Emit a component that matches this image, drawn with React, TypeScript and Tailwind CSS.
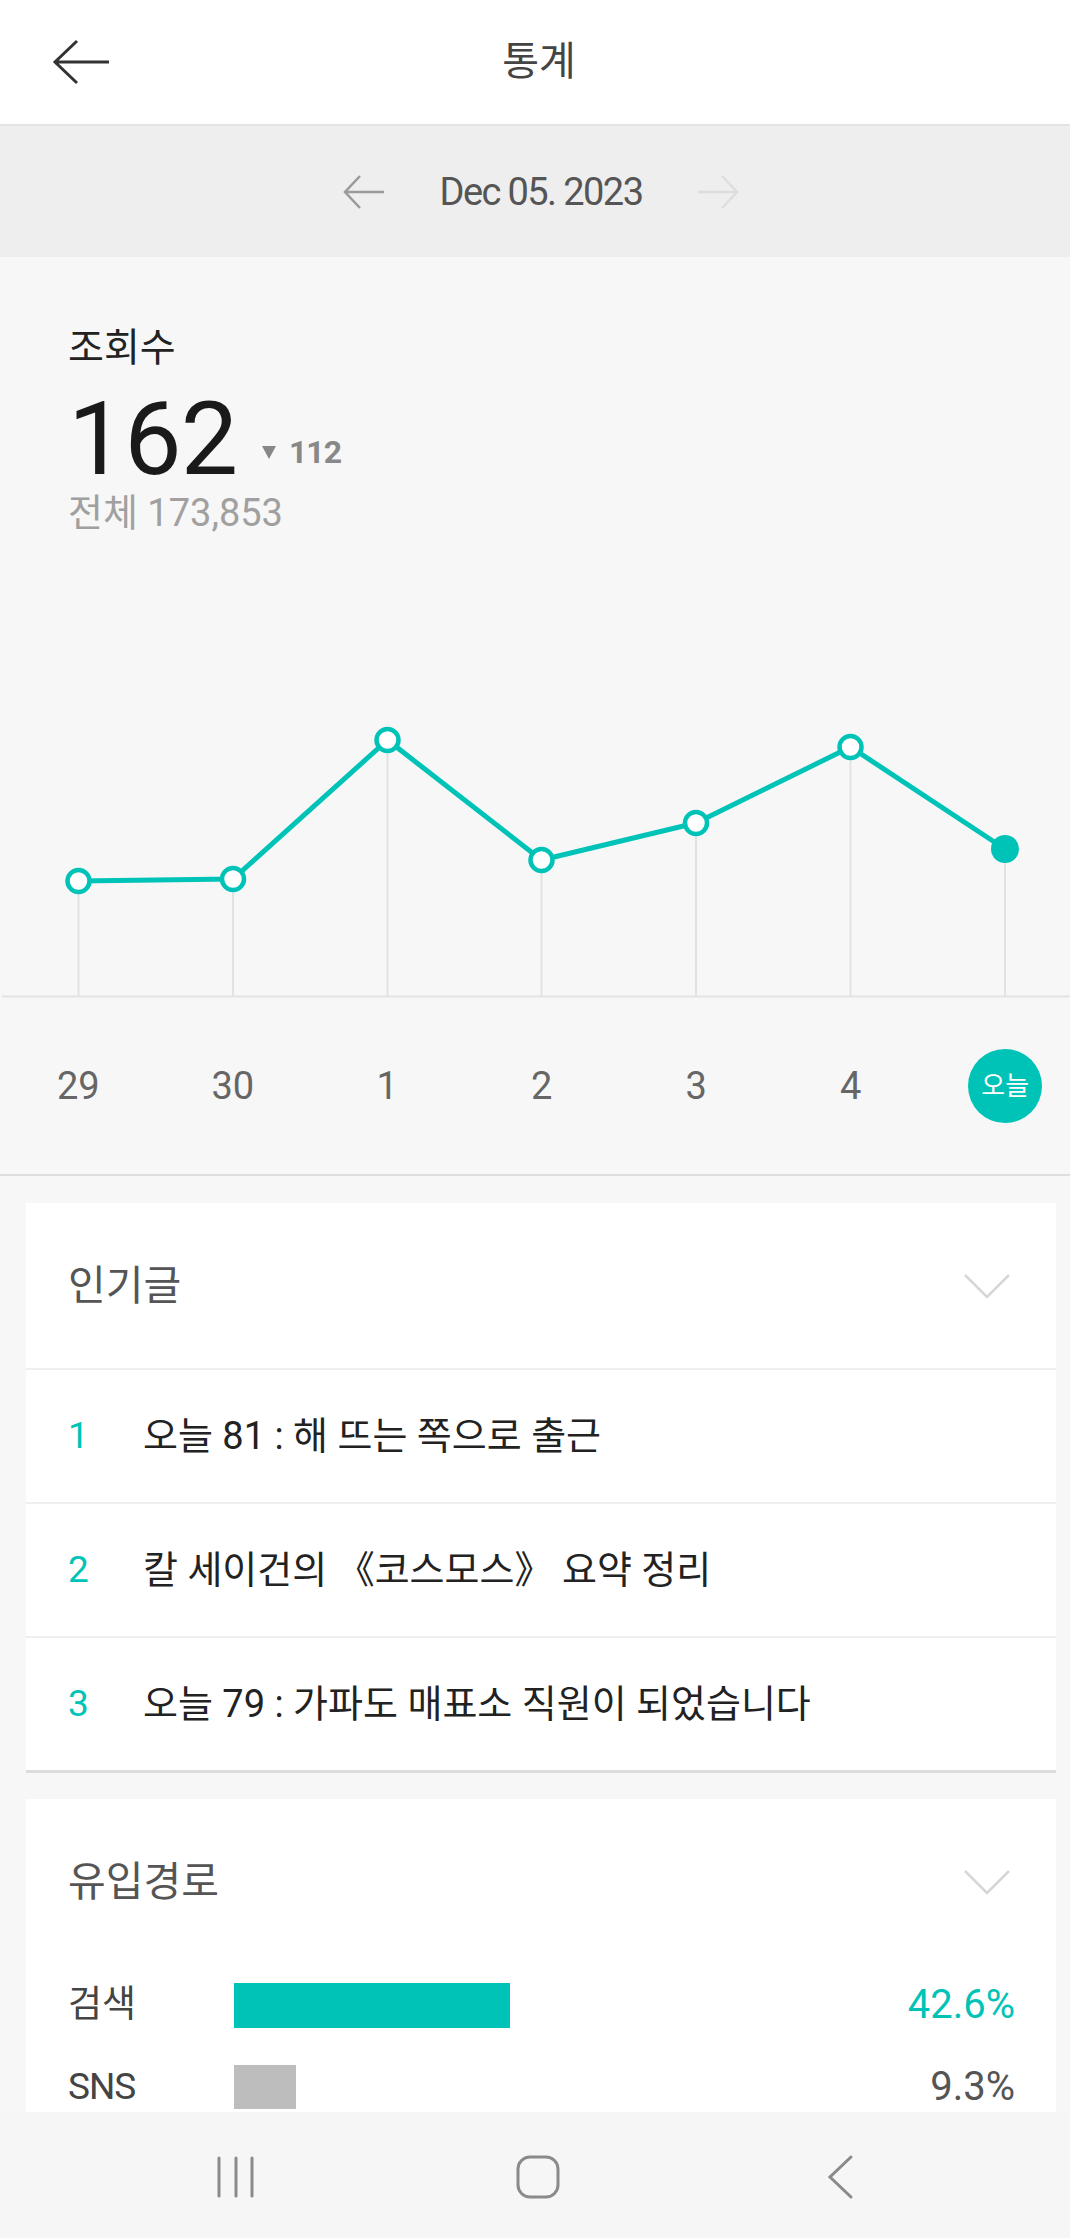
import React from "react";

const TEAL = "#00c3b8";

const points = [
  { x: 78.5, y: 321, label: "29" },
  { x: 233, y: 319, label: "30" },
  { x: 387.5, y: 180, label: "1" },
  { x: 541.5, y: 300, label: "2" },
  { x: 696, y: 263, label: "3" },
  { x: 850.5, y: 187, label: "4" },
  { x: 1005, y: 289, label: "오늘" },
];

const BASE = 436;

function Chart() {
  const d = points.map((p, i) => `${i === 0 ? "M" : "L"}${p.x} ${p.y}`).join(" ");
  return (
    <svg width="1070" height="438" viewBox="0 0 1070 438" className="block">
      {points.map((p) => (
        <line key={"v" + p.x} x1={p.x} y1={p.y} x2={p.x} y2={BASE} stroke="#e2e2e2" strokeWidth="2" />
      ))}
      <line x1="2" y1={BASE + 0.5} x2="1070" y2={BASE + 0.5} stroke="#e4e4e4" strokeWidth="2" />
      <path d={d} fill="none" stroke={TEAL} strokeWidth="5" strokeLinejoin="round" strokeLinecap="round" />
      {points.map((p, i) =>
        i === points.length - 1 ? (
          <circle key={"c" + i} cx={p.x} cy={p.y} r="14" fill={TEAL} />
        ) : (
          <circle key={"c" + i} cx={p.x} cy={p.y} r="11" fill="#ffffff" stroke={TEAL} strokeWidth="4.5" />
        )
      )}
    </svg>
  );
}

function Chevron() {
  return (
    <svg width="48" height="26" viewBox="0 0 48 26">
      <path d="M2 2 L24 24 L46 2" fill="none" stroke="#d6d6d6" strokeWidth="2.5" />
    </svg>
  );
}

const rows = [
  "오늘 81 : 해 뜨는 쪽으로 출근",
  "칼 세이건의 《코스모스》 요약 정리",
  "오늘 79 : 가파도 매표소 직원이 되었습니다",
];

export default function App() {
  return (
    <div
      className="w-[1070px] h-[2238px] flex flex-col overflow-hidden bg-[#f7f7f7]"
      style={{ fontFamily: '"Roboto", "Noto Sans CJK KR", "Noto Sans", sans-serif' }}
    >
      {/* Header */}
      <div className="h-[126px] shrink-0 bg-white border-b-2 border-[#e4e4e4] flex items-center">
        <div className="w-[160px] pl-[52px] flex items-center">
          <svg width="60" height="50" viewBox="0 0 60 50">
            <path d="M57 25 H3 M25 4 L3 25 L25 46" fill="none" stroke="#333333" strokeWidth="3" strokeLinejoin="miter" />
          </svg>
        </div>
        <div className="flex-1 text-center text-[40px] leading-[48px] text-[#444444]">통계</div>
        <div className="w-[152px]" />
      </div>

      {/* Date bar */}
      <div className="h-[131px] shrink-0 bg-[#eeeeee] flex items-center justify-center gap-[54px] pl-[12px]">
        <svg width="44" height="36" viewBox="0 0 44 36">
          <path d="M42 18 H3 M18 2 L3 18 L18 34" fill="none" stroke="#9a9a9a" strokeWidth="2.5" />
        </svg>
        <div className="text-[38px] leading-[44px] tracking-[-1.6px] text-[#555555]">Dec 05. 2023</div>
        <svg width="44" height="36" viewBox="0 0 44 36">
          <path d="M2 18 H41 M26 2 L41 18 L26 34" fill="none" stroke="#dddddd" strokeWidth="2.5" />
        </svg>
      </div>

      {/* Scroll content */}
      <div className="flex-1 overflow-hidden">
        {/* Stats */}
        <div className="border-b-2 border-[#dedede]">
          <div className="h-[303px] pl-[68px] pt-[69px]">
            <div className="text-[39px] leading-[44px] text-[#222222]">조회수</div>
            <div className="flex items-end mt-[25px]">
              <div className="text-[102px] leading-[88px] text-[#1a1a1a] tracking-[-1px]">162</div>
              <div className="flex items-center gap-[12px] ml-[24px] mb-[15px]">
                <svg width="16" height="15" viewBox="0 0 16 15">
                  <path d="M1 1 H15 L8 14 Z" fill="#888888" />
                </svg>
                <span className="text-[32px] leading-[32px] font-bold text-[#888888] tracking-[-1px]">112</span>
              </div>
            </div>
            <div className="text-[38px] leading-[40px] text-[#a0a0a0] mt-[10px]">전체 173,853</div>
          </div>
          <Chart />
          <div className="h-[176px] flex items-center pl-[1px]">
            {points.map((p, i) => (
              <div key={i} className="w-[154.5px] shrink-0 flex justify-center">
                {i === points.length - 1 ? (
                  <div className="w-[74px] h-[74px] rounded-full bg-[#00c3b8] flex items-center justify-center text-white text-[26px] leading-none">
                    {p.label}
                  </div>
                ) : (
                  <span className="text-[38px] leading-[44px] text-[#666666]">{p.label}</span>
                )}
              </div>
            ))}
          </div>
        </div>

        {/* Popular posts card */}
        <div className="mt-[27px] ml-[26px] mr-[14px] bg-white border-b-[3px] border-[#dcdcdc]">
          <div className="h-[165px] flex items-center justify-between pl-[42px] pr-[45px]">
            <span className="text-[41px] leading-[48px] text-[#555555]">인기글</span>
            <Chevron />
          </div>
          {rows.map((r, i) => (
            <div key={i} className="h-[134px] border-t-2 border-[#eeeeee] flex items-center pl-[42px]">
              <span className="w-[75px] text-[37px] leading-[44px] text-[#00c3b8]">{i + 1}</span>
              <span className="text-[38px] leading-[44px] text-[#222222]">{r}</span>
            </div>
          ))}
        </div>

        {/* Referrer card */}
        <div className="mt-[26px] ml-[26px] mr-[14px] bg-white">
          <div className="h-[165px] flex items-center justify-between pl-[42px] pr-[45px]">
            <span className="text-[41px] leading-[48px] text-[#555555]">유입경로</span>
            <Chevron />
          </div>
          <div className="h-[82px] flex items-center pl-[42px] pr-[41px]">
            <span className="w-[166px] text-[37px] leading-[44px] text-[#444444]">검색</span>
            <div className="flex-1">
              <div className="w-[276px] h-[45px] bg-[#00c3b8]" />
            </div>
            <span className="text-[40px] leading-[44px] text-[#00c3b8]">42.6%</span>
          </div>
          <div className="h-[82px] flex items-center pl-[42px] pr-[41px]">
            <span className="w-[166px] text-[37px] leading-[44px] tracking-[-1px] text-[#444444]">SNS</span>
            <div className="flex-1">
              <div className="w-[62px] h-[44px] bg-[#bdbdbd]" />
            </div>
            <span className="text-[40px] leading-[44px] text-[#555555]">9.3%</span>
          </div>
        </div>
      </div>

      {/* Nav bar */}
      <div className="h-[126px] shrink-0 bg-[#f6f6f6] flex items-center pl-[85px] pt-[4px]">
        <div className="w-[302px] flex justify-center">
          <svg width="40" height="44" viewBox="0 0 40 44">
            <path d="M3 3 V41 M20 3 V41 M36 3 V41" fill="none" stroke="#8a8a8a" strokeWidth="3" strokeLinecap="round" />
          </svg>
        </div>
        <div className="w-[302px] flex justify-center">
          <svg width="46" height="46" viewBox="0 0 46 46">
            <rect x="3" y="3" width="40" height="40" rx="12" fill="none" stroke="#8a8a8a" strokeWidth="3" />
          </svg>
        </div>
        <div className="w-[302px] flex justify-center">
          <svg width="28" height="46" viewBox="0 0 28 46">
            <path d="M25 3 L4 23 L25 43" fill="none" stroke="#8a8a8a" strokeWidth="3" strokeLinecap="round" />
          </svg>
        </div>
      </div>
    </div>
  );
}
